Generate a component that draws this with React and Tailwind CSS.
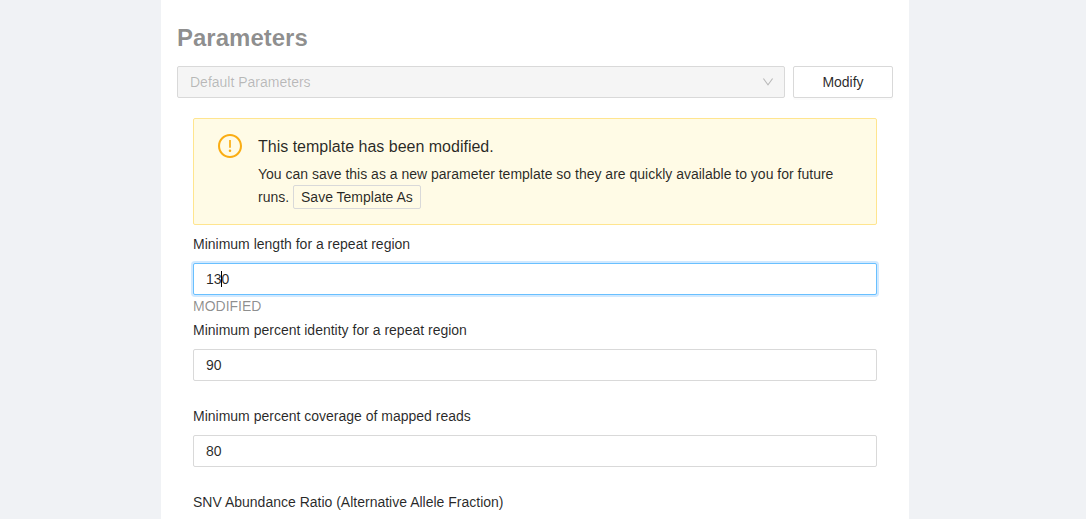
import { useState } from "react";

function ChevronDown() {
  return (
    <svg
      viewBox="64 64 896 896"
      fill="currentColor"
      aria-hidden="true"
      className="pointer-events-none absolute top-[10px] right-[11px] size-3 text-black/25"
    >
      <path d="M884 256h-75c-5.1 0-9.9 2.5-12.9 6.6L512 654.2 227.9 262.6c-3-4.1-7.8-6.6-12.9-6.6h-75c-6.5 0-10.3 7.4-6.5 12.7l352.6 486.1c12.8 17.6 39 17.6 51.7 0l352.6-486.1c3.9-5.3.1-12.7-6.4-12.7z" />
    </svg>
  );
}

function WarningIcon() {
  return (
    <svg
      viewBox="64 64 896 896"
      fill="currentColor"
      aria-hidden="true"
      className="size-6 shrink-0 text-[#faad14]"
    >
      <path d="M512 64C264.6 64 64 264.6 64 512s200.6 448 448 448 448-200.6 448-448S759.4 64 512 64zm0 820c-205.4 0-372-166.6-372-372s166.6-372 372-372 372 166.6 372 372-166.6 372-372 372z" />
      <path d="M464 688a48 48 0 1 0 96 0 48 48 0 1 0-96 0zm24-112h48c4.4 0 8-3.6 8-8V296c0-4.4-3.6-8-8-8h-48c-4.4 0-8 3.6-8 8v272c0 4.4 3.6 8 8 8z" />
    </svg>
  );
}

function ParameterField({ id, label, initial, active, modified }) {
  const [value, setValue] = useState(initial);
  return (
    <div>
      <label htmlFor={id} className="block pb-2">
        {label}
      </label>
      <div className="relative">
        <input
          id={id}
          type="text"
          value={value}
          onChange={(event) => setValue(event.target.value)}
          className={
            active
              ? "block h-8 w-full rounded-xs border border-[#69c0ff] bg-white px-3 caret-transparent shadow-[0_0_0_2px_rgba(24,144,255,0.2)] outline-none"
              : "block h-8 w-full rounded-xs border border-[#d9d9d9] bg-white px-3 outline-none"
          }
        />
        {active && (
          <span className="pointer-events-none absolute top-2 left-7 h-4 w-px bg-black" />
        )}
      </div>
      <div className="h-6 text-black/45">{modified && "MODIFIED"}</div>
    </div>
  );
}

const fields = [
  { id: "repeat-length", label: "Minimum length for a repeat region", initial: "130", active: true, modified: true },
  { id: "repeat-identity", label: "Minimum percent identity for a repeat region", initial: "90" },
  { id: "read-coverage", label: "Minimum percent coverage of mapped reads", initial: "80" },
  { id: "snv-ratio", label: "SNV Abundance Ratio (Alternative Allele Fraction)", initial: "0.75" },
];

export default function App() {
  return (
    <div className="h-screen overflow-hidden bg-[#f0f2f5] pr-4 font-['Liberation_Sans',Arial,sans-serif] text-sm leading-[22px] text-black/85">
      <main className="mx-auto min-h-full w-full max-w-[748px] bg-white px-4 pt-[22px]">
        <h2 className="pb-3 text-2xl leading-8 font-bold text-black/45">Parameters</h2>

        <div className="flex gap-2">
          <div className="relative flex-1">
            <select
              disabled
              aria-label="Parameter template"
              className="block h-8 w-full appearance-none rounded-xs border border-[#d9d9d9] bg-[#f5f5f5] px-3 text-black/25 opacity-100"
            >
              <option>Default Parameters</option>
            </select>
            <ChevronDown />
          </div>
          <button
            type="button"
            className="h-8 w-[100px] rounded-xs border border-[#d9d9d9] bg-white shadow-[0_2px_0_rgba(0,0,0,0.016)]"
          >
            Modify
          </button>
        </div>

        <section className="px-4 pt-5">
          <div
            role="alert"
            className="mb-2 flex gap-4 rounded-xs border border-[#ffe58f] bg-[#fffbe6] py-[15px] pr-[15px] pl-6"
          >
            <WarningIcon />
            <div>
              <div className="pb-1 text-base leading-[25px]">This template has been modified.</div>
              <div>
                You can save this as a new parameter template so they are quickly available to you for
                future runs.{" "}
                <button
                  type="button"
                  className="h-6 rounded-xs border border-[#d9d9d9] px-[7px] leading-[22px]"
                >
                  Save Template As
                </button>
              </div>
            </div>
          </div>

          <form>
            {fields.map((field) => (
              <ParameterField key={field.id} {...field} />
            ))}
          </form>
        </section>
      </main>
    </div>
  );
}
